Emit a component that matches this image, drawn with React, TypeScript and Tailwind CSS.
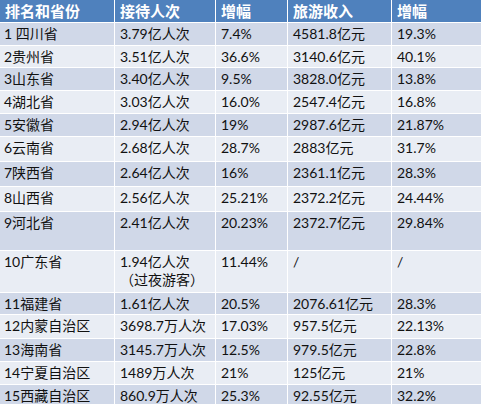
const rows = [
  { rank: '1 四川省', visits: '3.79亿人次', g1: '7.4%', income: '4581.8亿元', g2: '19.3%', h: 'h-[22px]' },
  { rank: '2贵州省', visits: '3.51亿人次', g1: '36.6%', income: '3140.6亿元', g2: '40.1%', h: 'h-[21px]' },
  { rank: '3山东省', visits: '3.40亿人次', g1: '9.5%', income: '3828.0亿元', g2: '13.8%', h: 'h-[22px]' },
  { rank: '4湖北省', visits: '3.03亿人次', g1: '16.0%', income: '2547.4亿元', g2: '16.8%', h: 'h-[22px]' },
  { rank: '5安徽省', visits: '2.94亿人次', g1: '19%', income: '2987.6亿元', g2: '21.87%', h: 'h-[22px]' },
  { rank: '6云南省', visits: '2.68亿人次', g1: '28.7%', income: '2883亿元', g2: '31.7%', h: 'h-[24px]' },
  { rank: '7陕西省', visits: '2.64亿人次', g1: '16%', income: '2361.1亿元', g2: '28.3%', h: 'h-[24px]' },
  { rank: '8山西省', visits: '2.56亿人次', g1: '25.21%', income: '2372.2亿元', g2: '24.44%', h: 'h-[24px]' },
  { rank: '9河北省', visits: '2.41亿人次', g1: '20.23%', income: '2372.7亿元', g2: '29.84%', h: 'h-[38px]' },
  { rank: '10广东省', visits: '1.94亿人次\n（过夜游客）', g1: '11.44%', income: '/', g2: '/', h: 'h-[41px]' },
  { rank: '11福建省', visits: '1.61亿人次', g1: '20.5%', income: '2076.61亿元', g2: '28.3%', h: 'h-[21px]' },
  { rank: '12内蒙自治区', visits: '3698.7万人次', g1: '17.03%', income: '957.5亿元', g2: '22.13%', h: 'h-[23px]' },
  { rank: '13海南省', visits: '3145.7万人次', g1: '12.5%', income: '979.5亿元', g2: '22.8%', h: 'h-[22px]' },
  { rank: '14宁夏自治区', visits: '1489万人次', g1: '21%', income: '125亿元', g2: '21%', h: 'h-[22px]' },
  { rank: '15西藏自治区', visits: '860.9万人次', g1: '25.3%', income: '92.55亿元', g2: '32.2%', h: 'h-[22px]' },
]

const headers = ['排名和省份', '接待人次', '增幅', '旅游收入', '增幅']

export default function App() {
  return (
    <div className="w-[483px] h-[404px] overflow-hidden bg-white font-['Lato','Noto_Sans_CJK_SC',sans-serif] text-[14px] text-[#111]">
      <div className="w-[481px] grid grid-cols-[114px_100px_71px_103px_89px] gap-px bg-white">
        {headers.map((h, i) => (
          <div
            key={i}
            className="h-[22px] bg-[#4f81bd] text-white font-bold text-[15px] leading-[18px] pt-[2px] pl-[5px]"
          >
            {h}
          </div>
        ))}
        {rows.map((r, i) => {
          const bg = i % 2 === 0 ? 'bg-[#d0d8e8]' : 'bg-[#e9edf4]'
          const cells = [r.rank, r.visits, r.g1, r.income, r.g2]
          return cells.map((c, j) => (
            <div
              key={i + '-' + j}
              className={`${r.h} ${bg} leading-[18px] pt-[2px] whitespace-pre-line ${j === 0 ? 'pl-[4px]' : 'pl-[5px]'}`}
            >
              {c}
            </div>
          ))
        })}
      </div>
    </div>
  )
}
